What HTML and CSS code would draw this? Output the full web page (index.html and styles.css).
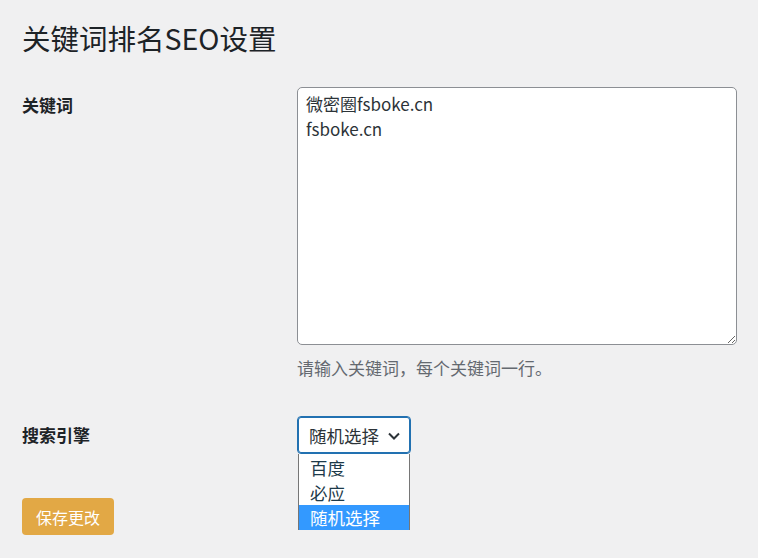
FILE: index.html
```html
<!DOCTYPE html>
<html lang="zh-CN">
<head>
    <meta charset="UTF-8">
    <meta name="viewport" content="width=device-width, initial-scale=1.0">
    <title>关键词排名SEO设置</title>
    <link rel="stylesheet" href="styles.css">
</head>
<body>
    <div class="wrap">
        <h1>关键词排名SEO设置</h1>

        <form class="settings-form">
            <div class="form-row">
                <label class="row-label" for="keywords">关键词</label>
                <div class="row-field">
                    <textarea id="keywords" class="keywords-input">微密圈fsboke.cn
fsboke.cn</textarea>
                    <p class="description">请输入关键词，每个关键词一行。</p>
                </div>
            </div>

            <div class="form-row engine-row">
                <label class="row-label">搜索引擎</label>
                <div class="row-field">
                    <div class="select-box">
                        <div class="select-current">
                            <span>随机选择</span>
                            <svg class="chevron" width="14" height="14" viewBox="0 0 14 14">
                                <path d="M2 4.5 L7 9.5 L12 4.5" fill="none" stroke="#2c3338" stroke-width="2"/>
                            </svg>
                        </div>
                        <!-- open dropdown list -->
                        <ul class="select-options">
                            <li>百度</li>
                            <li>必应</li>
                            <li class="selected">随机选择</li>
                        </ul>
                    </div>
                </div>
            </div>

            <button type="submit" class="button-save">保存更改</button>
        </form>
    </div>
</body>
</html>
```

FILE: styles.css
```css
body {
    margin: 0;
    padding: 0;
    background-color: #f0f0f1;
    color: #1d2327;
    font-family: "Noto Sans CJK SC", "Noto Sans", sans-serif;
}

.wrap {
    padding: 18px 22px 0;
}

h1 {
    font-size: 28.5px;
    font-weight: 400;
    line-height: 40px;
    margin: 0 0 29px;
    color: #1d2327;
}

/* Form rows */
.form-row {
    display: grid;
    grid-template-columns: 275px 440px;
}

.row-label {
    font-size: 17px;
    font-weight: 700;
    line-height: 24px;
    padding-top: 6px;
}

.keywords-input {
    display: block;
    box-sizing: border-box;
    width: 440px;
    height: 258px;
    margin: 0;
    padding: 3px 8px;
    border: 1px solid #8c8f94;
    border-radius: 5px;
    background: #fff;
    color: #2c3338;
    font-family: "Noto Sans CJK SC", "Noto Sans", sans-serif;
    font-size: 17px;
    line-height: 25px;
    resize: both;
}

.description {
    margin: 8px 0 0;
    font-size: 17px;
    line-height: 30px;
    color: #646970;
}

.engine-row {
    margin-top: 33px;
}

.engine-row .row-label {
    padding-top: 7px;
}

/* Select with open list */
.select-box {
    position: relative;
    width: 114px;
}

.select-current {
    box-sizing: border-box;
    height: 38px;
    display: flex;
    align-items: center;
    justify-content: space-between;
    padding: 0 9px 0 11px;
    border: 1px solid #2271b1;
    border-radius: 4px;
    box-shadow: 0 0 0 1px #2271b1 inset;
    background: #fff;
    color: #2c3338;
    font-size: 17.5px;
}

.chevron {
    margin-top: 1px;
}

.select-options {
    position: absolute;
    top: 38px;
    left: 1px;
    width: 112px;
    box-sizing: border-box;
    margin: 0;
    padding: 0;
    list-style: none;
    background: #fff;
    border: 1px solid #767676;
    border-top: none;
    border-bottom: none;
}

.select-options li {
    height: 25px;
    line-height: 25px;
    padding: 0 11px;
    font-size: 17.5px;
    color: #1d3a4a;
}

.select-options li:first-child {
    padding-top: 1px;
}

.select-options li.selected {
    background-color: #3399ff;
    color: #fff;
}

/* Button */
.button-save {
    display: block;
    margin-top: 44px;
    width: 92px;
    height: 37px;
    padding: 0;
    border: none;
    border-radius: 4px;
    background-color: #e2a845;
    color: #fff;
    font-family: "Noto Sans CJK SC", "Noto Sans", sans-serif;
    font-size: 16px;
    cursor: pointer;
}
```
